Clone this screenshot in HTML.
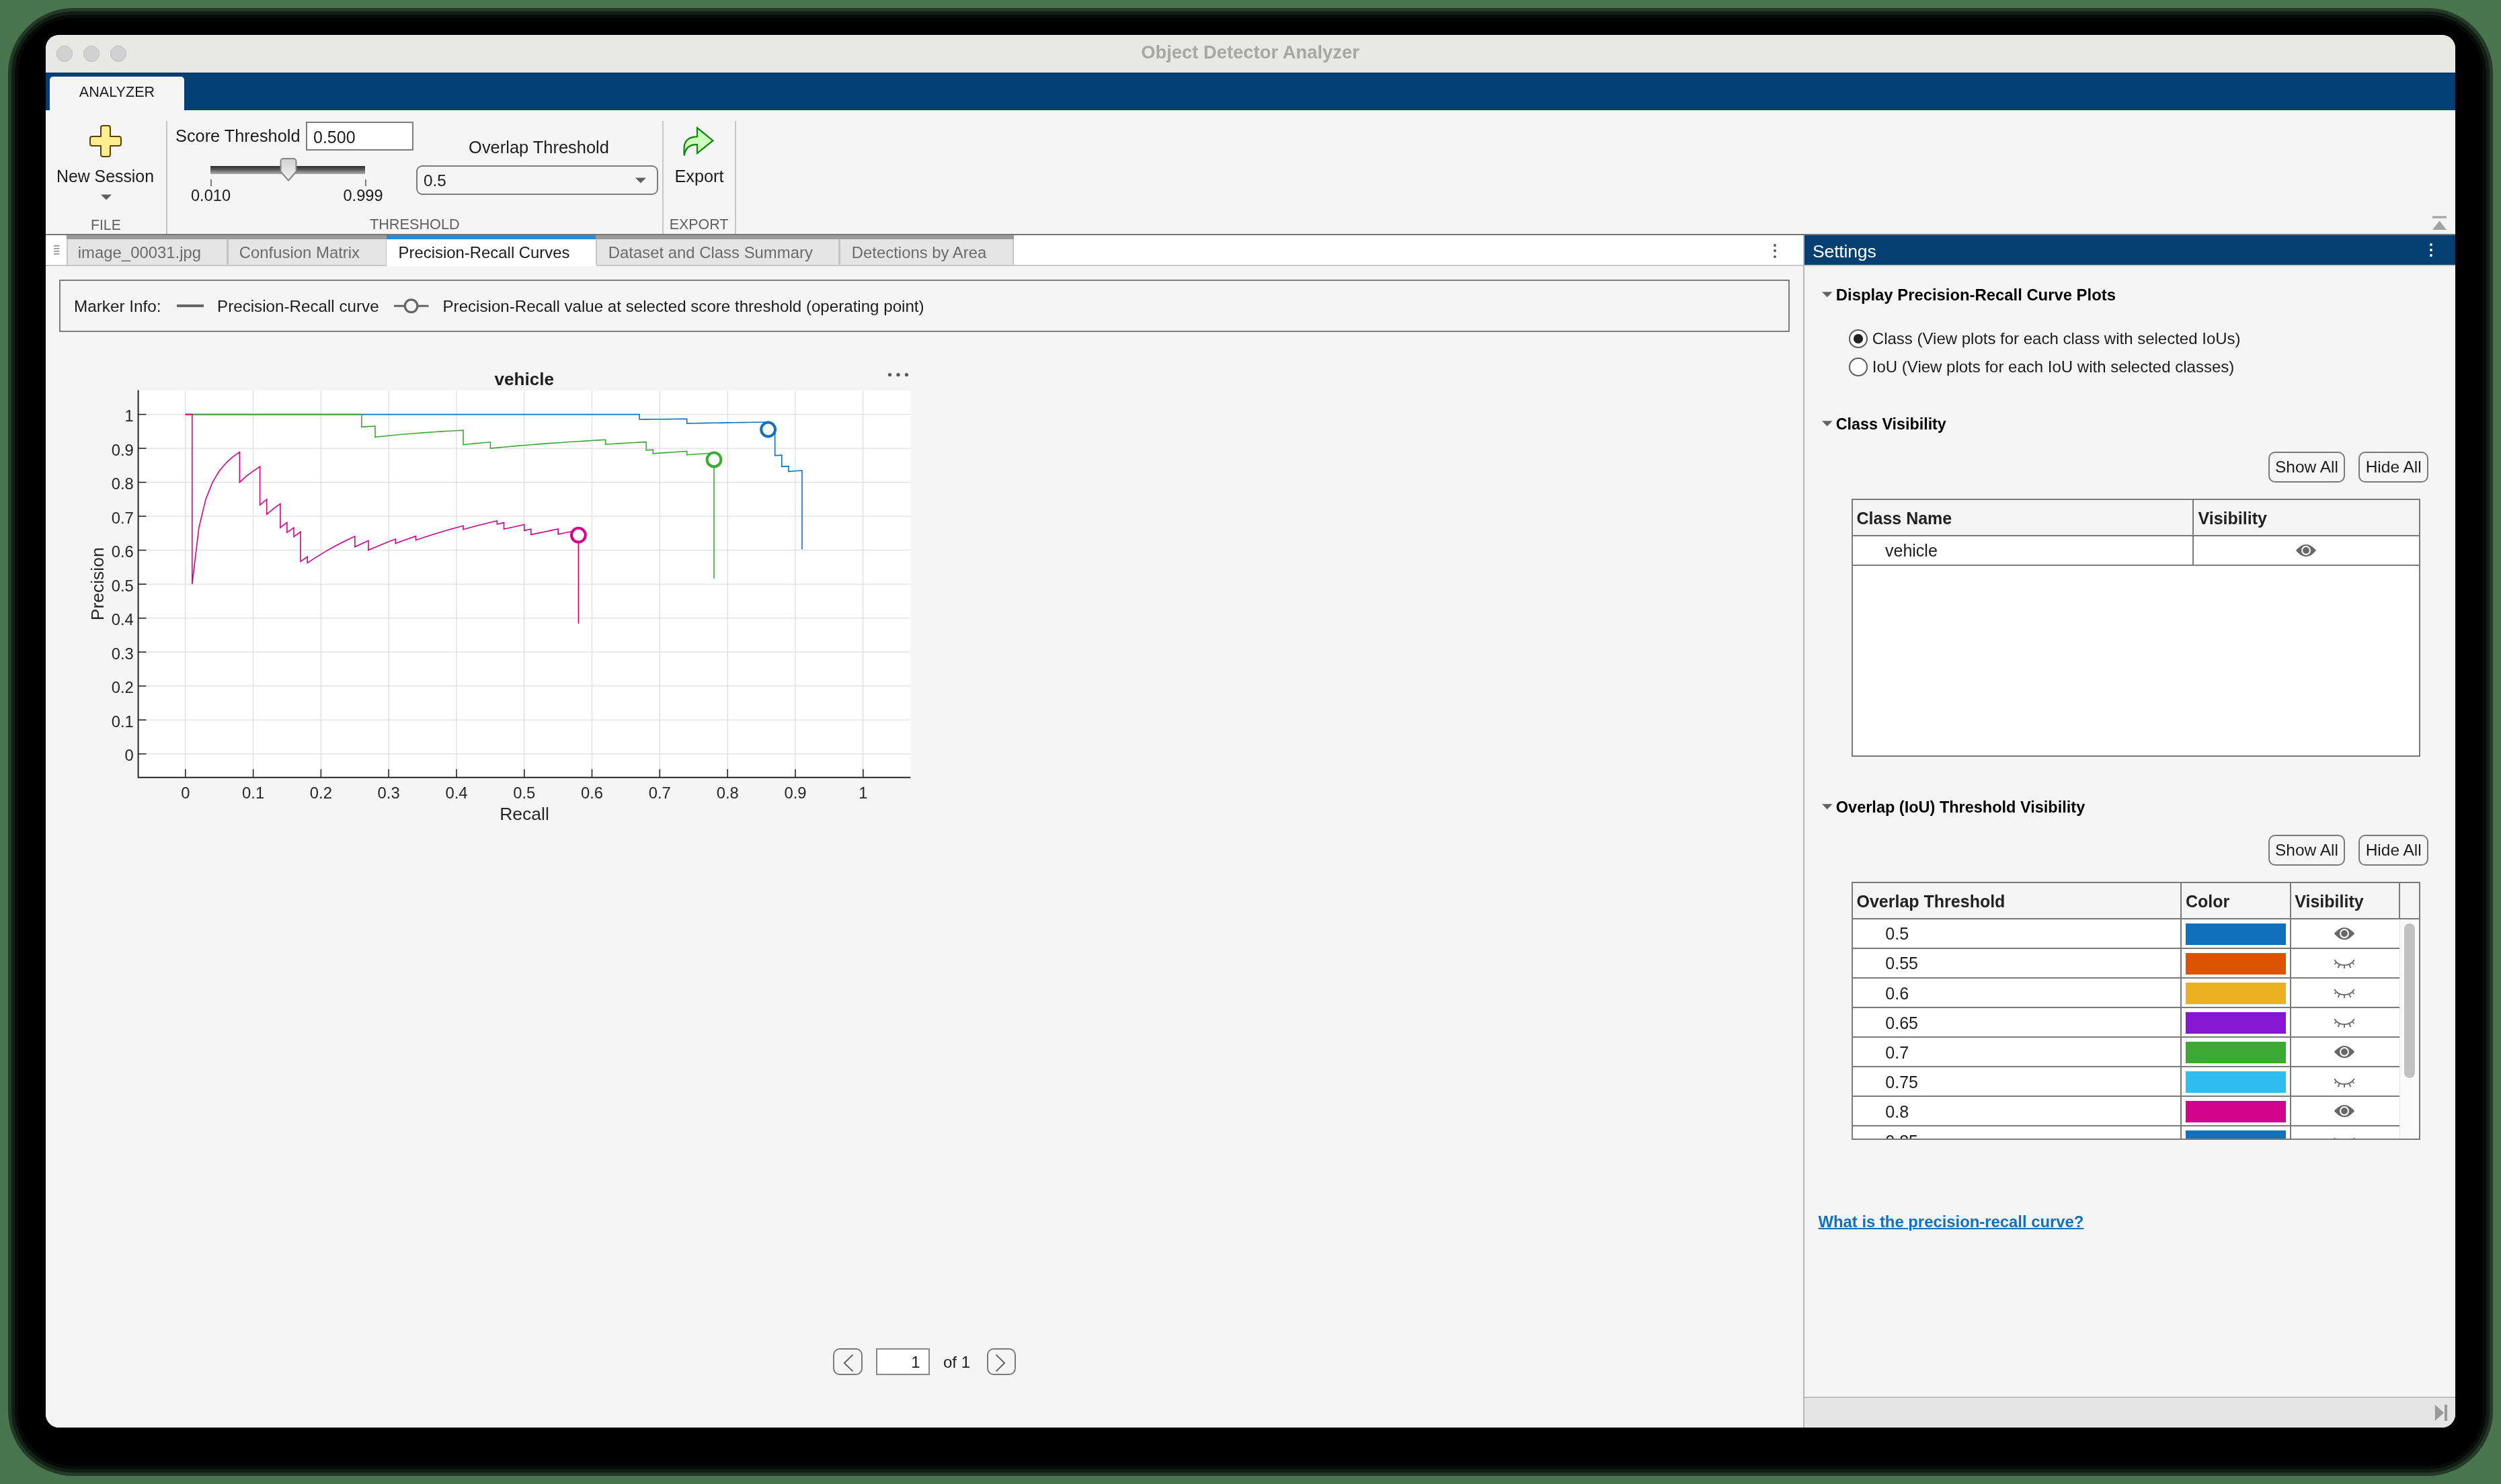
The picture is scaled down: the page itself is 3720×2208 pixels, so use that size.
<!DOCTYPE html>
<html lang="en"><head><meta charset="utf-8"><title>Object Detector Analyzer</title>
<style>
html,body{margin:0;padding:0}
body{width:3720px;height:2208px;overflow:hidden;background:#48744e;font-family:"Liberation Sans",sans-serif;position:relative}
div,span{box-sizing:border-box}
#shadow{position:absolute;left:27px;top:27px;width:3666px;height:2154px;border-radius:82px;background:#000;box-shadow:0 0 0 5px rgba(0,0,0,.6),0 0 0 10px rgba(0,0,0,.5),0 0 0 15px rgba(0,0,0,.5)}
#win{position:absolute;left:68px;top:52px;width:3584px;height:2072px;border-radius:20px;overflow:hidden;background:#f5f5f5}
#pg{position:absolute;left:-68px;top:-52px;width:3720px;height:2208px;will-change:transform}
.sep{position:absolute;top:180px;width:2px;height:168px;background:#c6c6c6}
.tab{position:absolute;top:350px;height:44px;background:#e5e5e5;border-left:2px solid #c4c4c4;border-right:2px solid #c4c4c4}
.tab i{position:absolute;left:-2px;right:-2px;top:0;height:6px;background:#9b9b9b}
.tab.act{background:#fff;border-color:#fff;height:46px}
.tab.act i{background:#268bdd}
.btn{position:absolute;border:2px solid #7a7a7a;border-radius:10px;background:#f5f5f5}
.tbl{position:absolute;border:2px solid #7a7a7a;background:#fff;overflow:hidden}
.hl{position:absolute;height:2px;background:#7a7a7a}
.vl{position:absolute;width:2px;background:#7a7a7a}
.sw{position:absolute;left:3251px;width:149px;height:32px}
svg{position:absolute;overflow:visible}
</style></head><body>
<div id="shadow"></div>
<div id="win"><div id="pg">

<div class="titlebar" style="position:absolute;left:68.00px;top:52.00px;width:3584.00px;height:56.00px;background:#e8e8e6;border-top:1px solid #f6f6f6"></div>
<div style="position:absolute;left:84.00px;top:68.00px;width:24.00px;height:24.00px;border-radius:50%;background:#d2d2d2;border:1px solid #b9b9b9"></div>
<div style="position:absolute;left:124.00px;top:68.00px;width:24.00px;height:24.00px;border-radius:50%;background:#d2d2d2;border:1px solid #b9b9b9"></div>
<div style="position:absolute;left:164.00px;top:68.00px;width:24.00px;height:24.00px;border-radius:50%;background:#d2d2d2;border:1px solid #b9b9b9"></div>
<span style="position:absolute;left:1859.50px;transform:translateX(-50%);top:64.31px;font-size:27.4px;line-height:1;font-weight:700;color:#a6a6a6;white-space:nowrap;">Object Detector Analyzer</span>
<div class="ribbon" style="position:absolute;left:68.00px;top:108.00px;width:3584.00px;height:56.00px;background:#023f73;border-top:1px solid #002a55"></div>
<div style="position:absolute;left:74.00px;top:114.00px;width:200.00px;height:51.00px;background:#f5f5f5;border-radius:5px 5px 0 0"></div>
<span style="position:absolute;left:174.00px;transform:translateX(-50%);top:126.42px;font-size:21.6px;line-height:1;color:#1c1c1c;white-space:nowrap;">ANALYZER</span>
<div class="toolbar" style="position:absolute;left:68.00px;top:164.00px;width:3584.00px;height:184.00px;background:#f5f5f5"></div>
<div class="sep" style="left:247px"></div>
<div class="sep" style="left:985px"></div>
<div class="sep" style="left:1093px"></div>
<svg style="left:128px;top:181px" width="58" height="58" viewBox="128 181 58 58">
<path d="M153,187 h8 a3,3 0 0 1 3,3 v13 h13 a3,3 0 0 1 3,3 v8 a3,3 0 0 1 -3,3 h-13 v13 a3,3 0 0 1 -3,3 h-8 a3,3 0 0 1 -3,-3 v-13 h-13 a3,3 0 0 1 -3,-3 v-8 a3,3 0 0 1 3,-3 h13 v-13 a3,3 0 0 1 3,-3 z" fill="none" stroke="#ffffff" stroke-width="4.5" stroke-linejoin="round"/>
<path d="M153,187 h8 a3,3 0 0 1 3,3 v13 h13 a3,3 0 0 1 3,3 v8 a3,3 0 0 1 -3,3 h-13 v13 a3,3 0 0 1 -3,3 h-8 a3,3 0 0 1 -3,-3 v-13 h-13 a3,3 0 0 1 -3,-3 v-8 a3,3 0 0 1 3,-3 h13 v-13 a3,3 0 0 1 3,-3 z" fill="#ffee90" stroke="#5e3f00" stroke-width="2" stroke-linejoin="round"/>
</svg>
<span style="position:absolute;left:156.50px;transform:translateX(-50%);top:250.66px;font-size:24.85px;line-height:1;color:#1c1c1c;white-space:nowrap;">New Session</span>
<svg style="left:150px;top:289px" width="16" height="9" viewBox="0 0 16 9"><path d="M0,0.5 H16 L8,8.5 Z" fill="#5e5e5e"/></svg>
<span style="position:absolute;left:157.40px;transform:translateX(-50%);top:323.75px;font-size:21.2px;line-height:1;color:#616161;white-space:nowrap;">FILE</span>
<span style="position:absolute;left:261.00px;top:190.24px;font-size:25.35px;line-height:1;color:#1c1c1c;white-space:nowrap;">Score Threshold</span>
<div style="position:absolute;left:455.00px;top:181.00px;width:160.00px;height:43.40px;background:#fff;border:2px solid #7d7d7d"></div>
<span style="position:absolute;left:466.00px;top:191.54px;font-size:25px;line-height:1;color:#1c1c1c;white-space:nowrap;">0.500</span>
<div style="position:absolute;left:313.00px;top:247.00px;width:230.00px;height:12.00px;background:linear-gradient(#2c2c2c,#5a5a5a 45%,#b0b0b0)"></div>
<div style="position:absolute;left:313.00px;top:267.00px;width:2.00px;height:10.00px;background:#7a7a7a"></div>
<div style="position:absolute;left:543.00px;top:267.00px;width:2.00px;height:10.00px;background:#7a7a7a"></div>
<svg style="left:414px;top:233px" width="30" height="38" viewBox="414 233 30 38">
<defs><linearGradient id="tg" x1="0" y1="0" x2="0" y2="1"><stop offset="0" stop-color="#d2d2d2"/><stop offset="1" stop-color="#f2f2f2"/></linearGradient></defs>
<path d="M417.5,240 a4,4 0 0 1 4,-4 h15 a4,4 0 0 1 4,4 v15.5 l-11.5,13 l-11.5,-13 z" fill="url(#tg)" stroke="#858585" stroke-width="2" stroke-linejoin="round"/></svg>
<span style="position:absolute;left:313.50px;transform:translateX(-50%);top:280.02px;font-size:23.6px;line-height:1;color:#1c1c1c;white-space:nowrap;">0.010</span>
<span style="position:absolute;left:540.00px;transform:translateX(-50%);top:280.02px;font-size:23.6px;line-height:1;color:#1c1c1c;white-space:nowrap;">0.999</span>
<span style="position:absolute;left:616.80px;transform:translateX(-50%);top:323.33px;font-size:21.7px;line-height:1;color:#616161;white-space:nowrap;">THRESHOLD</span>
<span style="position:absolute;left:801.50px;transform:translateX(-50%);top:207.16px;font-size:25.45px;line-height:1;color:#1c1c1c;white-space:nowrap;">Overlap Threshold</span>
<div style="position:absolute;left:619.00px;top:246.00px;width:359.50px;height:43.60px;border:2px solid #7d7d7d;border-radius:9px;background:#f5f5f5"></div>
<span style="position:absolute;left:630.00px;top:256.53px;font-size:24.3px;line-height:1;color:#1c1c1c;white-space:nowrap;">0.5</span>
<svg style="left:945px;top:264px" width="16" height="9" viewBox="0 0 16 9"><path d="M0,0.5 H16 L8,8.5 Z" fill="#5e5e5e"/></svg>
<svg style="left:1010px;top:184px" width="58" height="52" viewBox="1010 184 58 52">
<path d="M1037,190.2 L1060.4,209.2 L1037,228 L1037,215.2 C1027,214.8 1019.5,219 1017.6,231.6 L1017.6,219.5 C1017.8,208.5 1026,203.4 1037,203.4 Z" fill="#ccffbb" stroke="#0a860a" stroke-width="2.2" stroke-linejoin="miter"/></svg>
<span style="position:absolute;left:1040.00px;transform:translateX(-50%);top:250.33px;font-size:25.25px;line-height:1;color:#1c1c1c;white-space:nowrap;">Export</span>
<span style="position:absolute;left:1039.60px;transform:translateX(-50%);top:323.58px;font-size:21.4px;line-height:1;color:#616161;white-space:nowrap;">EXPORT</span>
<svg style="left:3617px;top:321px" width="23" height="22" viewBox="0 0 23 22"><rect x="1" y="0.5" width="21" height="3.2" fill="#a3a3a3"/><path d="M1,21 L11.5,7.5 L22,21 Z" fill="#a3a3a3"/></svg>
<div style="position:absolute;left:68.00px;top:348.00px;width:3584.00px;height:2.00px;background:#767676"></div>
<div class="tabstrip" style="position:absolute;left:68.00px;top:350.00px;width:2614.00px;height:44.00px;background:#fff"></div>
<div style="position:absolute;left:68.00px;top:394.00px;width:2614.00px;height:2.00px;background:#c8c8c8"></div>
<svg style="left:80px;top:365px" width="9" height="15" viewBox="0 0 9 15"><g fill="#8a8a8a"><rect y="0" width="8.5" height="1.6"/><rect y="4" width="8.5" height="1.6"/><rect y="8" width="8.5" height="1.6"/><rect y="12" width="8.5" height="1.6"/></g></svg>
<div class="tab" style="left:99px;width:240px"><i></i></div>
<span style="position:absolute;left:115.80px;top:364.47px;font-size:23.9px;line-height:1;color:#6b6b6b;white-space:nowrap;">image_00031.jpg</span>
<div class="tab" style="left:338px;width:237.5px"><i></i></div>
<span style="position:absolute;left:355.80px;top:364.47px;font-size:23.9px;line-height:1;color:#6b6b6b;white-space:nowrap;">Confusion Matrix</span>
<div class="tab act" style="left:574.5px;width:312.5px"><i></i></div>
<span style="position:absolute;left:592.60px;top:364.47px;font-size:23.9px;line-height:1;color:#1a1a1a;white-space:nowrap;">Precision-Recall Curves</span>
<div class="tab" style="left:886px;width:363px"><i></i></div>
<span style="position:absolute;left:904.80px;top:364.47px;font-size:23.9px;line-height:1;color:#6b6b6b;white-space:nowrap;">Dataset and Class Summary</span>
<div class="tab" style="left:1248px;width:259.5px"><i></i></div>
<span style="position:absolute;left:1266.80px;top:364.47px;font-size:23.9px;line-height:1;color:#6b6b6b;white-space:nowrap;">Detections by Area</span>
<div style="position:absolute;left:2638.00px;top:362.80px;width:4.00px;height:4.00px;border-radius:50%;background:#5a5a5a"></div>
<div style="position:absolute;left:2638.00px;top:371.20px;width:4.00px;height:4.00px;border-radius:50%;background:#5a5a5a"></div>
<div style="position:absolute;left:2638.00px;top:379.60px;width:4.00px;height:4.00px;border-radius:50%;background:#5a5a5a"></div>
<div class="doc" style="position:absolute;left:68.00px;top:396.00px;width:2614.00px;height:1728.00px;background:#f5f5f5"></div>
<div class="legendbox" style="position:absolute;left:88.00px;top:416.00px;width:2574.00px;height:77.50px;border:2px solid #7d7d7d"></div>
<span style="position:absolute;left:110.00px;top:444.13px;font-size:24.3px;line-height:1;color:#1c1c1c;white-space:nowrap;">Marker Info:</span>
<div style="position:absolute;left:263.00px;top:453.00px;width:40.00px;height:4.00px;background:#676767"></div>
<span style="position:absolute;left:323.00px;top:444.21px;font-size:24.2px;line-height:1;color:#1c1c1c;white-space:nowrap;">Precision-Recall curve</span>
<svg style="left:584px;top:442px" width="56" height="26" viewBox="584 442 56 26"><line x1="586" y1="455.2" x2="637.5" y2="455.2" stroke="#666" stroke-width="3"/><circle cx="611.6" cy="455.2" r="9.3" fill="#f5f5f5" stroke="#666" stroke-width="3.2"/></svg>
<span style="position:absolute;left:658.50px;top:444.27px;font-size:24.13px;line-height:1;color:#1c1c1c;white-space:nowrap;">Precision-Recall value at selected score threshold (operating point)</span>
<svg id="plot" style="left:100px;top:530px" width="1320" height="720" viewBox="100 530 1320 720">
<rect x="205.5" y="581" width="1148.7" height="575.7" fill="#fff"/>
<g stroke="#dfdfdf" stroke-width="1.3">
<line x1="275.8" y1="581" x2="275.8" y2="1156"/>
<line x1="206" y1="1121.7" x2="1354" y2="1121.7"/>
<line x1="376.6" y1="581" x2="376.6" y2="1156"/>
<line x1="206" y1="1071.2" x2="1354" y2="1071.2"/>
<line x1="477.4" y1="581" x2="477.4" y2="1156"/>
<line x1="206" y1="1020.7" x2="1354" y2="1020.7"/>
<line x1="578.1" y1="581" x2="578.1" y2="1156"/>
<line x1="206" y1="970.2" x2="1354" y2="970.2"/>
<line x1="679.0" y1="581" x2="679.0" y2="1156"/>
<line x1="206" y1="919.7" x2="1354" y2="919.7"/>
<line x1="779.8" y1="581" x2="779.8" y2="1156"/>
<line x1="206" y1="869.2" x2="1354" y2="869.2"/>
<line x1="880.5" y1="581" x2="880.5" y2="1156"/>
<line x1="206" y1="818.6" x2="1354" y2="818.6"/>
<line x1="981.3" y1="581" x2="981.3" y2="1156"/>
<line x1="206" y1="768.1" x2="1354" y2="768.1"/>
<line x1="1082.2" y1="581" x2="1082.2" y2="1156"/>
<line x1="206" y1="717.6" x2="1354" y2="717.6"/>
<line x1="1183.0" y1="581" x2="1183.0" y2="1156"/>
<line x1="206" y1="667.1" x2="1354" y2="667.1"/>
<line x1="1283.8" y1="581" x2="1283.8" y2="1156"/>
<line x1="206" y1="616.6" x2="1354" y2="616.6"/>
</g>
<polyline points="275.8,616.6 285.8,616.6 295.9,616.6 306.0,616.6 316.1,616.6 326.1,616.6 336.2,616.6 346.3,616.6 356.4,616.6 366.5,616.6 376.6,616.6 386.6,616.6 396.7,616.6 406.8,616.6 416.9,616.6 426.9,616.6 437.0,616.6 447.1,616.6 457.2,616.6 467.3,616.6 477.4,616.6 487.4,616.6 497.5,616.6 507.6,616.6 517.7,616.6 527.8,616.6 537.8,616.6 547.9,616.6 558.0,616.6 568.1,616.6 578.1,616.6 588.2,616.6 598.3,616.6 608.4,616.6 618.5,616.6 628.5,616.6 638.6,616.6 648.7,616.6 658.8,616.6 668.9,616.6 679.0,616.6 689.0,616.6 699.1,616.6 709.2,616.6 719.3,616.6 729.4,616.6 739.4,616.6 749.5,616.6 759.6,616.6 769.7,616.6 779.8,616.6 789.8,616.6 799.9,616.6 810.0,616.6 820.1,616.6 830.2,616.6 840.2,616.6 850.3,616.6 860.4,616.6 870.5,616.6 880.5,616.6 890.6,616.6 900.7,616.6 910.8,616.6 920.9,616.6 931.0,616.6 941.0,616.6 951.1,616.6 951.1,624.0 961.2,623.9 971.3,623.8 981.3,623.7 991.4,623.6 1001.5,623.5 1011.6,623.4 1021.7,623.3 1021.7,629.9 1031.8,629.7 1041.8,629.6 1051.9,629.4 1062.0,629.2 1072.1,629.1 1082.2,628.9 1092.2,628.8 1102.3,628.6 1112.4,628.5 1122.5,628.3 1132.5,628.2 1142.6,628.1 1142.6,633.6 1142.6,639.0 1152.7,638.8 1152.7,644.1 1152.7,649.2 1152.7,654.2 1152.7,659.1 1152.7,664.0 1152.7,668.7 1152.7,673.3 1152.7,677.8 1162.8,677.2 1162.8,681.6 1162.8,685.9 1162.8,690.2 1162.8,694.3 1172.9,693.6 1172.9,697.6 1172.9,701.6 1183.0,700.8 1193.0,700.0 1193.0,703.8 1193.0,707.6 1193.0,711.3 1193.0,714.9 1193.0,718.5 1193.0,722.0 1193.0,725.5 1193.0,728.8 1193.0,732.2 1193.0,735.4 1193.0,738.7 1193.0,741.8 1193.0,744.9 1193.0,748.0 1193.0,751.0 1193.0,754.0 1193.0,756.9 1193.0,759.8 1193.0,762.6 1193.0,765.4 1193.0,768.1 1193.0,770.8 1193.0,773.5 1193.0,776.1 1193.0,778.7 1193.0,781.2 1193.0,783.7 1193.0,786.2 1193.0,788.6 1193.0,791.0 1193.0,793.4 1193.0,795.7 1193.0,798.0 1193.0,800.3 1193.0,802.5 1193.0,804.7 1193.0,806.9 1193.0,809.0 1193.0,811.1 1193.0,813.2 1193.0,815.3 1193.0,817.3" fill="none" stroke="#1171be" stroke-width="1.6" stroke-linejoin="miter"/>
<polyline points="275.8,616.6 285.8,616.6 295.9,616.6 306.0,616.6 316.1,616.6 326.1,616.6 336.2,616.6 346.3,616.6 356.4,616.6 366.5,616.6 376.6,616.6 386.6,616.6 396.7,616.6 406.8,616.6 416.9,616.6 426.9,616.6 437.0,616.6 447.1,616.6 457.2,616.6 467.3,616.6 477.4,616.6 487.4,616.6 497.5,616.6 507.6,616.6 517.7,616.6 527.8,616.6 537.8,616.6 537.8,635.3 547.9,634.6 558.0,634.0 558.0,650.3 568.1,649.2 578.1,648.2 588.2,647.2 598.3,646.3 608.4,645.5 618.5,644.7 628.5,643.9 638.6,643.2 648.7,642.5 658.8,641.9 668.9,641.2 679.0,640.7 689.0,640.1 689.0,651.0 689.0,661.5 699.1,660.5 709.2,659.6 719.3,658.7 729.4,657.8 729.4,667.1 739.4,666.1 749.5,665.2 759.6,664.3 769.7,663.4 779.8,662.5 789.8,661.7 799.9,660.9 810.0,660.1 820.1,659.4 830.2,658.7 840.2,658.0 850.3,657.3 860.4,656.7 870.5,656.1 880.5,655.5 890.6,654.9 900.7,654.3 900.7,661.2 910.8,660.5 920.9,659.9 931.0,659.3 941.0,658.7 951.1,658.1 961.2,657.6 961.2,663.7 961.2,669.8 971.3,669.1 971.3,674.9 981.3,674.1 991.4,673.4 1001.5,672.7 1011.6,672.0 1021.7,671.4 1021.7,676.7 1031.8,676.0 1041.8,675.3 1051.9,674.7 1062.0,674.0 1062.0,679.0 1062.0,683.9 1062.0,688.8 1062.0,693.5 1062.0,698.1 1062.0,702.6 1062.0,707.0 1062.0,711.3 1062.0,715.5 1062.0,719.7 1062.0,723.7 1062.0,727.7 1062.0,731.6 1062.0,735.4 1062.0,739.2 1062.0,742.9 1062.0,746.5 1062.0,750.0 1062.0,753.5 1062.0,756.9 1062.0,760.3 1062.0,763.5 1062.0,766.8 1062.0,769.9 1062.0,773.0 1062.0,776.1 1062.0,779.1 1062.0,782.1 1062.0,785.0 1062.0,787.8 1062.0,790.6 1062.0,793.4 1062.0,796.1 1062.0,798.8 1062.0,801.4 1062.0,804.0 1062.0,806.5 1062.0,809.0 1062.0,811.5 1062.0,813.9 1062.0,816.3 1062.0,818.6 1062.0,821.0 1062.0,823.2 1062.0,825.5 1062.0,827.7 1062.0,829.9 1062.0,832.0 1062.0,834.1 1062.0,836.2 1062.0,838.3 1062.0,840.3 1062.0,842.3 1062.0,844.3 1062.0,846.2 1062.0,848.1 1062.0,850.0 1062.0,851.9 1062.0,853.7 1062.0,855.5 1062.0,857.3 1062.0,859.0 1062.0,860.8" fill="none" stroke="#3baa32" stroke-width="1.6" stroke-linejoin="miter"/>
<polyline points="275.8,616.6 285.8,616.6 285.8,869.2 295.9,785.0 306.0,742.9 316.1,717.6 326.1,700.8 336.2,688.8 346.3,679.7 356.4,672.7 356.4,717.6 366.5,708.4 376.6,700.8 386.6,694.3 386.6,724.8 386.6,751.3 396.7,742.9 396.7,765.2 406.8,756.9 416.9,749.5 416.9,768.1 416.9,785.0 426.9,777.3 426.9,792.3 437.0,785.0 437.0,798.4 447.1,791.4 447.1,803.7 447.1,815.0 447.1,825.6 447.1,835.5 457.2,828.4 457.2,837.6 467.3,830.9 477.4,824.6 487.4,818.6 497.5,813.0 507.6,807.7 517.7,802.7 527.8,797.9 527.8,806.0 527.8,813.7 537.8,809.0 547.9,804.5 547.9,811.8 547.9,818.6 558.0,814.2 568.1,810.0 578.1,806.0 588.2,802.1 588.2,808.5 598.3,804.8 608.4,801.2 618.5,797.7 618.5,803.7 628.5,800.3 638.6,797.0 648.7,793.8 658.8,790.8 668.9,787.8 679.0,785.0 689.0,782.2 689.0,787.7 699.1,785.0 709.2,782.3 719.3,779.8 729.4,777.3 739.4,774.9 739.4,780.0 749.5,777.6 749.5,782.6 749.5,787.3 759.6,785.0 769.7,782.7 779.8,780.4 779.8,785.0 779.8,789.4 789.8,787.2 789.8,791.4 789.8,795.6 799.9,793.4 810.0,791.2 820.1,789.1 830.2,787.0 830.2,791.0 830.2,794.9 840.2,792.8 850.3,790.8 860.4,788.8 860.4,792.5 860.4,796.2 860.4,799.8 860.4,803.3 860.4,806.7 860.4,810.0 860.4,813.3 860.4,816.5 860.4,819.7 860.4,822.8 860.4,825.8 860.4,828.7 860.4,831.6 860.4,834.5 860.4,837.3 860.4,840.0 860.4,842.7 860.4,845.3 860.4,847.9 860.4,850.4 860.4,852.9 860.4,855.4 860.4,857.8 860.4,860.1 860.4,862.4 860.4,864.7 860.4,867.0 860.4,869.2 860.4,871.3 860.4,873.4 860.4,875.5 860.4,877.6 860.4,879.6 860.4,881.6 860.4,883.5 860.4,885.4 860.4,887.3 860.4,889.2 860.4,891.0 860.4,892.8 860.4,894.6 860.4,896.3 860.4,898.1 860.4,899.8 860.4,901.4 860.4,903.1 860.4,904.7 860.4,906.3 860.4,907.9 860.4,909.4 860.4,910.9 860.4,912.4 860.4,913.9 860.4,915.4 860.4,916.8 860.4,918.3 860.4,919.7 860.4,921.0 860.4,922.4 860.4,923.8 860.4,925.1 860.4,926.4 860.4,927.7" fill="none" stroke="#d1048b" stroke-width="1.6" stroke-linejoin="miter"/>
<circle cx="1142.6" cy="639.0" r="10.4" fill="#fff" stroke="#1171be" stroke-width="4"/>
<circle cx="1062.0" cy="683.9" r="10.4" fill="#fff" stroke="#3baa32" stroke-width="4"/>
<circle cx="860.4" cy="796.2" r="10.4" fill="#fff" stroke="#d1048b" stroke-width="4"/>
<g stroke="#262626" stroke-width="1.6">
<line x1="275.8" y1="1156" x2="275.8" y2="1144.5"/>
<line x1="206" y1="1121.7" x2="217.5" y2="1121.7"/>
<line x1="376.6" y1="1156" x2="376.6" y2="1144.5"/>
<line x1="206" y1="1071.2" x2="217.5" y2="1071.2"/>
<line x1="477.4" y1="1156" x2="477.4" y2="1144.5"/>
<line x1="206" y1="1020.7" x2="217.5" y2="1020.7"/>
<line x1="578.1" y1="1156" x2="578.1" y2="1144.5"/>
<line x1="206" y1="970.2" x2="217.5" y2="970.2"/>
<line x1="679.0" y1="1156" x2="679.0" y2="1144.5"/>
<line x1="206" y1="919.7" x2="217.5" y2="919.7"/>
<line x1="779.8" y1="1156" x2="779.8" y2="1144.5"/>
<line x1="206" y1="869.2" x2="217.5" y2="869.2"/>
<line x1="880.5" y1="1156" x2="880.5" y2="1144.5"/>
<line x1="206" y1="818.6" x2="217.5" y2="818.6"/>
<line x1="981.3" y1="1156" x2="981.3" y2="1144.5"/>
<line x1="206" y1="768.1" x2="217.5" y2="768.1"/>
<line x1="1082.2" y1="1156" x2="1082.2" y2="1144.5"/>
<line x1="206" y1="717.6" x2="217.5" y2="717.6"/>
<line x1="1183.0" y1="1156" x2="1183.0" y2="1144.5"/>
<line x1="206" y1="667.1" x2="217.5" y2="667.1"/>
<line x1="1283.8" y1="1156" x2="1283.8" y2="1144.5"/>
<line x1="206" y1="616.6" x2="217.5" y2="616.6"/>
</g>
<path d="M205.6,580.5 V1156.7 H1354.2" fill="none" stroke="#262626" stroke-width="2"/>
<g font-family="Liberation Sans, sans-serif" font-size="23.8" fill="#262626">
<text x="275.8" y="1187.5" text-anchor="middle">0</text>
<text x="198.8" y="1132.3" text-anchor="end">0</text>
<text x="376.6" y="1187.5" text-anchor="middle">0.1</text>
<text x="198.8" y="1081.8" text-anchor="end">0.1</text>
<text x="477.4" y="1187.5" text-anchor="middle">0.2</text>
<text x="198.8" y="1031.3" text-anchor="end">0.2</text>
<text x="578.1" y="1187.5" text-anchor="middle">0.3</text>
<text x="198.8" y="980.8" text-anchor="end">0.3</text>
<text x="679.0" y="1187.5" text-anchor="middle">0.4</text>
<text x="198.8" y="930.3" text-anchor="end">0.4</text>
<text x="779.8" y="1187.5" text-anchor="middle">0.5</text>
<text x="198.8" y="879.8" text-anchor="end">0.5</text>
<text x="880.5" y="1187.5" text-anchor="middle">0.6</text>
<text x="198.8" y="829.2" text-anchor="end">0.6</text>
<text x="981.3" y="1187.5" text-anchor="middle">0.7</text>
<text x="198.8" y="778.7" text-anchor="end">0.7</text>
<text x="1082.2" y="1187.5" text-anchor="middle">0.8</text>
<text x="198.8" y="728.2" text-anchor="end">0.8</text>
<text x="1183.0" y="1187.5" text-anchor="middle">0.9</text>
<text x="198.8" y="677.7" text-anchor="end">0.9</text>
<text x="1283.8" y="1187.5" text-anchor="middle">1</text>
<text x="198.8" y="627.2" text-anchor="end">1</text>
</g>
<text x="780" y="1219.6" text-anchor="middle" font-family="Liberation Sans, sans-serif" font-size="26.5" fill="#262626">Recall</text>
<text transform="translate(153.8,868.8) rotate(-90)" text-anchor="middle" font-family="Liberation Sans, sans-serif" font-size="26.5" fill="#262626">Precision</text>
<text x="779.8" y="572.8" text-anchor="middle" font-family="Liberation Sans, sans-serif" font-size="26.1" font-weight="700" fill="#1f1f1f">vehicle</text>
<circle cx="1323.5" cy="557.6" r="2.7" fill="#5a5a5a"/>
<circle cx="1336" cy="557.6" r="2.7" fill="#5a5a5a"/>
<circle cx="1348.5" cy="557.6" r="2.7" fill="#5a5a5a"/>
</svg>
<div class="btn" style="position:absolute;left:1239.00px;top:2006.00px;width:44.00px;height:39.70px;"></div>
<svg style="left:1239px;top:2006px" width="44" height="40" viewBox="1239 2006 44 40"><path d="M1268.5,2015.6 L1255.8,2028 L1268.5,2040.4" fill="none" stroke="#5a5a5a" stroke-width="1.8"/></svg>
<div style="position:absolute;left:1303.00px;top:2006.00px;width:80.00px;height:39.70px;background:#fff;border:2px solid #8a8a8a"></div>
<span style="position:absolute;left:1368.50px;transform:translateX(-100%);top:2015.38px;font-size:24px;line-height:1;color:#1c1c1c;white-space:nowrap;">1</span>
<span style="position:absolute;left:1403.00px;top:2015.38px;font-size:24px;line-height:1;color:#1c1c1c;white-space:nowrap;">of 1</span>
<div class="btn" style="position:absolute;left:1467.50px;top:2006.00px;width:43.50px;height:39.70px;"></div>
<svg style="left:1467px;top:2006px" width="44" height="40" viewBox="1467 2006 44 40"><path d="M1481.5,2015.6 L1494.2,2028 L1481.5,2040.4" fill="none" stroke="#5a5a5a" stroke-width="1.8"/></svg>
<div style="position:absolute;left:2682.00px;top:350.00px;width:2.00px;height:1774.00px;background:#b8b8b8"></div>
<div class="settingshdr" style="position:absolute;left:2684.00px;top:350.00px;width:968.00px;height:44.00px;background:#043f72"></div>
<div style="position:absolute;left:2684.00px;top:394.00px;width:968.00px;height:2.00px;background:#c8c8c8"></div>
<span style="position:absolute;left:2696.00px;top:361.48px;font-size:26.6px;line-height:1;color:#ffffff;white-space:nowrap;letter-spacing:-0.2px">Settings</span>
<div style="position:absolute;left:3614.00px;top:362.30px;width:4.00px;height:4.00px;border-radius:50%;background:#fff"></div>
<div style="position:absolute;left:3614.00px;top:370.10px;width:4.00px;height:4.00px;border-radius:50%;background:#fff"></div>
<div style="position:absolute;left:3614.00px;top:377.90px;width:4.00px;height:4.00px;border-radius:50%;background:#fff"></div>
<svg style="left:2710.4px;top:434.2px" width="16" height="9" viewBox="0 0 16 9"><path d="M0,0.3 H15.6 L7.8,8.3 Z" fill="#636363"/></svg>
<span style="position:absolute;left:2730.80px;top:426.91px;font-size:23.85px;line-height:1;font-weight:700;color:#000;white-space:nowrap;">Display Precision-Recall Curve Plots</span>
<div style="position:absolute;left:2750.20px;top:490.20px;width:27.60px;height:27.60px;border-radius:50%;border:2px solid #5c5c5c;background:#fff"></div>
<div style="position:absolute;left:2757.30px;top:497.30px;width:13.40px;height:13.40px;border-radius:50%;background:#222"></div>
<span style="position:absolute;left:2784.80px;top:492.18px;font-size:24px;line-height:1;color:#1c1c1c;white-space:nowrap;">Class (View plots for each class with selected IoUs)</span>
<div style="position:absolute;left:2750.20px;top:532.20px;width:27.60px;height:27.60px;border-radius:50%;border:2px solid #5c5c5c;background:#fff"></div>
<span style="position:absolute;left:2784.80px;top:533.98px;font-size:24px;line-height:1;color:#1c1c1c;white-space:nowrap;">IoU (View plots for each IoU with selected classes)</span>
<svg style="left:2710.4px;top:626px" width="16" height="9" viewBox="0 0 16 9"><path d="M0,0.3 H15.6 L7.8,8.3 Z" fill="#636363"/></svg>
<span style="position:absolute;left:2730.80px;top:619.68px;font-size:23.3px;line-height:1;font-weight:700;color:#000;white-space:nowrap;">Class Visibility</span>
<div class="btn" style="position:absolute;left:3374.00px;top:672.00px;width:114.00px;height:46.00px;"></div>
<span style="position:absolute;left:3431.00px;transform:translateX(-50%);top:682.96px;font-size:24.5px;line-height:1;color:#1c1c1c;white-space:nowrap;">Show All</span>
<div class="btn" style="position:absolute;left:3508.00px;top:672.00px;width:104.00px;height:46.00px;"></div>
<span style="position:absolute;left:3560.20px;transform:translateX(-50%);top:682.96px;font-size:24.5px;line-height:1;color:#1c1c1c;white-space:nowrap;">Hide All</span>
<div class="tbl" style="position:absolute;left:2754.00px;top:742.00px;width:846.00px;height:384.00px;"></div>
<div style="position:absolute;left:2756.00px;top:744.00px;width:842.00px;height:52.00px;background:#f5f5f5"></div>
<div class="hl" style="left:2756px;top:796px;width:842px"></div>
<div class="hl" style="left:2756px;top:840px;width:842px"></div>
<div class="vl" style="left:3261px;top:744px;height:97px"></div>
<span style="position:absolute;left:2761.50px;top:759.24px;font-size:25px;line-height:1;font-weight:700;color:#212121;white-space:nowrap;">Class Name</span>
<span style="position:absolute;left:3269.50px;top:759.24px;font-size:25px;line-height:1;font-weight:700;color:#212121;white-space:nowrap;">Visibility</span>
<span style="position:absolute;left:2804.00px;top:807.44px;font-size:25px;line-height:1;color:#1c1c1c;white-space:nowrap;">vehicle</span>
<svg style="left:3412px;top:807px" width="36" height="24" viewBox="3412 807 36 24"><path d="M3414.9,819 C3420.5,812.6 3425,809.9 3430,809.9 C3435,809.9 3439.5,812.6 3445.1,819 C3439.5,825.4 3435,828.1 3430,828.1 C3425,828.1 3420.5,825.4 3414.9,819 Z" fill="#676767"/><circle cx="3430" cy="819" r="5.95" fill="none" stroke="#fff" stroke-width="2.1"/></svg>
<svg style="left:2710.4px;top:1195.6px" width="16" height="9" viewBox="0 0 16 9"><path d="M0,0.3 H15.6 L7.8,8.3 Z" fill="#636363"/></svg>
<span style="position:absolute;left:2730.80px;top:1189.61px;font-size:23.5px;line-height:1;font-weight:700;color:#000;white-space:nowrap;">Overlap (IoU) Threshold Visibility</span>
<div class="btn" style="position:absolute;left:3374.00px;top:1242.00px;width:114.00px;height:46.00px;"></div>
<span style="position:absolute;left:3431.00px;transform:translateX(-50%);top:1252.96px;font-size:24.5px;line-height:1;color:#1c1c1c;white-space:nowrap;">Show All</span>
<div class="btn" style="position:absolute;left:3508.00px;top:1242.00px;width:104.00px;height:46.00px;"></div>
<span style="position:absolute;left:3560.20px;transform:translateX(-50%);top:1252.96px;font-size:24.5px;line-height:1;color:#1c1c1c;white-space:nowrap;">Hide All</span>
<div class="tbl" style="position:absolute;left:2754.00px;top:1312.00px;width:846.00px;height:384.00px;"></div>
<div style="position:absolute;left:2756.00px;top:1314.00px;width:842.00px;height:52.00px;background:#f5f5f5"></div>
<div class="hl" style="left:2756px;top:1366px;width:842px"></div>
<span style="position:absolute;left:2761.50px;top:1329.34px;font-size:25px;line-height:1;font-weight:700;color:#212121;white-space:nowrap;">Overlap Threshold</span>
<span style="position:absolute;left:3251.00px;top:1329.34px;font-size:25px;line-height:1;font-weight:700;color:#212121;white-space:nowrap;">Color</span>
<span style="position:absolute;left:3413.30px;top:1329.34px;font-size:25px;line-height:1;font-weight:700;color:#212121;white-space:nowrap;">Visibility</span>
<div style="position:absolute;left:0;top:1366px;width:3720px;height:328px;overflow:hidden"><div style="position:absolute;left:0;top:-1366px"><span style="position:absolute;left:2804.30px;top:1377.44px;font-size:25px;line-height:1;color:#1c1c1c;white-space:nowrap;">0.5</span><div class="sw" style="top:1374.0px;background:#1171be"></div><svg style="left:3469px;top:1376.9px" width="36" height="24" viewBox="3469 1376.9 36 24"><path d="M3471.9,1388.9 C3477.5,1382.5 3482,1379.8000000000002 3487,1379.8000000000002 C3492,1379.8000000000002 3496.5,1382.5 3502.1,1388.9 C3496.5,1395.3000000000002 3492,1398.0 3487,1398.0 C3482,1398.0 3477.5,1395.3000000000002 3471.9,1388.9 Z" fill="#676767"/><circle cx="3487" cy="1388.9" r="5.95" fill="none" stroke="#fff" stroke-width="2.1"/></svg><div class="hl" style="left:2756px;top:1410.0px;width:813px"></div><span style="position:absolute;left:2804.30px;top:1421.49px;font-size:25px;line-height:1;color:#1c1c1c;white-space:nowrap;">0.55</span><div class="sw" style="top:1418.0px;background:#dd5400"></div><svg style="left:3469px;top:1424.3px" width="36" height="20" viewBox="3469 1424.3 36 20"><g fill="none" stroke="#666" stroke-width="1.8" stroke-linecap="butt"><path d="M3472.2,1428.3 C3475.3999999999996,1433.8999999999999 3479.5,1436.3999999999999 3487,1436.3999999999999 C3494.5,1436.3999999999999 3498.6000000000004,1433.8999999999999 3501.8,1428.3"/><line x1="3474.7" y1="1432.8" x2="3472.6" y2="1435.2"/><line x1="3479.7" y1="1435.8" x2="3477.6" y2="1440.3"/><line x1="3487" y1="1436.7" x2="3487" y2="1441.3"/><line x1="3494.3" y1="1435.8" x2="3496.4" y2="1440.3"/><line x1="3499.3" y1="1432.8" x2="3501.4" y2="1435.2"/></g></svg><div class="hl" style="left:2756px;top:1454.1px;width:813px"></div><span style="position:absolute;left:2804.30px;top:1465.54px;font-size:25px;line-height:1;color:#1c1c1c;white-space:nowrap;">0.6</span><div class="sw" style="top:1462.1px;background:#ecb120"></div><svg style="left:3469px;top:1468.35px" width="36" height="20" viewBox="3469 1468.35 36 20"><g fill="none" stroke="#666" stroke-width="1.8" stroke-linecap="butt"><path d="M3472.2,1472.35 C3475.3999999999996,1477.9499999999998 3479.5,1480.4499999999998 3487,1480.4499999999998 C3494.5,1480.4499999999998 3498.6000000000004,1477.9499999999998 3501.8,1472.35"/><line x1="3474.7" y1="1476.85" x2="3472.6" y2="1479.25"/><line x1="3479.7" y1="1479.85" x2="3477.6" y2="1484.35"/><line x1="3487" y1="1480.75" x2="3487" y2="1485.35"/><line x1="3494.3" y1="1479.85" x2="3496.4" y2="1484.35"/><line x1="3499.3" y1="1476.85" x2="3501.4" y2="1479.25"/></g></svg><div class="hl" style="left:2756px;top:1498.2px;width:813px"></div><span style="position:absolute;left:2804.30px;top:1509.59px;font-size:25px;line-height:1;color:#1c1c1c;white-space:nowrap;">0.65</span><div class="sw" style="top:1506.2px;background:#8516d1"></div><svg style="left:3469px;top:1512.4px" width="36" height="20" viewBox="3469 1512.4 36 20"><g fill="none" stroke="#666" stroke-width="1.8" stroke-linecap="butt"><path d="M3472.2,1516.4 C3475.3999999999996,1522.0 3479.5,1524.5 3487,1524.5 C3494.5,1524.5 3498.6000000000004,1522.0 3501.8,1516.4"/><line x1="3474.7" y1="1520.9" x2="3472.6" y2="1523.3000000000002"/><line x1="3479.7" y1="1523.9" x2="3477.6" y2="1528.4"/><line x1="3487" y1="1524.8000000000002" x2="3487" y2="1529.4"/><line x1="3494.3" y1="1523.9" x2="3496.4" y2="1528.4"/><line x1="3499.3" y1="1520.9" x2="3501.4" y2="1523.3000000000002"/></g></svg><div class="hl" style="left:2756px;top:1542.2px;width:813px"></div><span style="position:absolute;left:2804.30px;top:1553.64px;font-size:25px;line-height:1;color:#1c1c1c;white-space:nowrap;">0.7</span><div class="sw" style="top:1550.2px;background:#3baa32"></div><svg style="left:3469px;top:1553.1000000000001px" width="36" height="24" viewBox="3469 1553.1000000000001 36 24"><path d="M3471.9,1565.1000000000001 C3477.5,1558.7 3482,1556.0000000000002 3487,1556.0000000000002 C3492,1556.0000000000002 3496.5,1558.7 3502.1,1565.1000000000001 C3496.5,1571.5000000000002 3492,1574.2 3487,1574.2 C3482,1574.2 3477.5,1571.5000000000002 3471.9,1565.1000000000001 Z" fill="#676767"/><circle cx="3487" cy="1565.1000000000001" r="5.95" fill="none" stroke="#fff" stroke-width="2.1"/></svg><div class="hl" style="left:2756px;top:1586.2px;width:813px"></div><span style="position:absolute;left:2804.30px;top:1597.69px;font-size:25px;line-height:1;color:#1c1c1c;white-space:nowrap;">0.75</span><div class="sw" style="top:1594.2px;background:#2fbeef"></div><svg style="left:3469px;top:1600.5px" width="36" height="20" viewBox="3469 1600.5 36 20"><g fill="none" stroke="#666" stroke-width="1.8" stroke-linecap="butt"><path d="M3472.2,1604.5 C3475.3999999999996,1610.1 3479.5,1612.6 3487,1612.6 C3494.5,1612.6 3498.6000000000004,1610.1 3501.8,1604.5"/><line x1="3474.7" y1="1609.0" x2="3472.6" y2="1611.4"/><line x1="3479.7" y1="1612.0" x2="3477.6" y2="1616.5"/><line x1="3487" y1="1612.9" x2="3487" y2="1617.5"/><line x1="3494.3" y1="1612.0" x2="3496.4" y2="1616.5"/><line x1="3499.3" y1="1609.0" x2="3501.4" y2="1611.4"/></g></svg><div class="hl" style="left:2756px;top:1630.3px;width:813px"></div><span style="position:absolute;left:2804.30px;top:1641.74px;font-size:25px;line-height:1;color:#1c1c1c;white-space:nowrap;">0.8</span><div class="sw" style="top:1638.3px;background:#d1048b"></div><svg style="left:3469px;top:1641.2px" width="36" height="24" viewBox="3469 1641.2 36 24"><path d="M3471.9,1653.2 C3477.5,1646.8 3482,1644.1000000000001 3487,1644.1000000000001 C3492,1644.1000000000001 3496.5,1646.8 3502.1,1653.2 C3496.5,1659.6000000000001 3492,1662.3 3487,1662.3 C3482,1662.3 3477.5,1659.6000000000001 3471.9,1653.2 Z" fill="#676767"/><circle cx="3487" cy="1653.2" r="5.95" fill="none" stroke="#fff" stroke-width="2.1"/></svg><div class="hl" style="left:2756px;top:1674.3px;width:813px"></div><span style="position:absolute;left:2804.30px;top:1685.79px;font-size:25px;line-height:1;color:#1c1c1c;white-space:nowrap;">0.85</span><div class="sw" style="top:1682.3px;background:#1171be"></div><svg style="left:3469px;top:1688.6px" width="36" height="20" viewBox="3469 1688.6 36 20"><g fill="none" stroke="#666" stroke-width="1.8" stroke-linecap="butt"><path d="M3472.2,1692.6 C3475.3999999999996,1698.1999999999998 3479.5,1700.6999999999998 3487,1700.6999999999998 C3494.5,1700.6999999999998 3498.6000000000004,1698.1999999999998 3501.8,1692.6"/><line x1="3474.7" y1="1697.1" x2="3472.6" y2="1699.5"/><line x1="3479.7" y1="1700.1" x2="3477.6" y2="1704.6"/><line x1="3487" y1="1701.0" x2="3487" y2="1705.6"/><line x1="3494.3" y1="1700.1" x2="3496.4" y2="1704.6"/><line x1="3499.3" y1="1697.1" x2="3501.4" y2="1699.5"/></g></svg></div></div>
<div class="vl" style="left:3243px;top:1314px;height:380px"></div>
<div class="vl" style="left:3406.3px;top:1314px;height:380px"></div>
<div class="vl" style="left:3568.2px;top:1314px;height:54px"></div>
<div style="position:absolute;left:3569.00px;top:1368.00px;width:29.00px;height:326.00px;background:#fafafa;border-left:1.5px solid #e6e6e6"></div>
<div style="position:absolute;left:3576.20px;top:1374.00px;width:15.60px;height:230.00px;background:#c1c1c1;border-radius:8px"></div>
<span style="position:absolute;left:2704.50px;top:1806.11px;font-size:23.85px;line-height:1;font-weight:700;color:#1171be;white-space:nowrap;text-decoration:underline;text-decoration-thickness:2px;text-underline-offset:0.5px">What is the precision-recall curve?</span>
<div style="position:absolute;left:2684.00px;top:2078.00px;width:968.00px;height:2.00px;background:#bdbdbd"></div>
<div style="position:absolute;left:2684.00px;top:2080.00px;width:968.00px;height:44.00px;background:#e5e5e5"></div>
<svg style="left:3621px;top:2090px" width="20" height="24" viewBox="0 0 20 24"><path d="M0.8,0 L14,12 L0.8,24 Z" fill="#999"/><rect x="15" y="0" width="4" height="24" fill="#999"/></svg>
</div></div>
</body></html>
